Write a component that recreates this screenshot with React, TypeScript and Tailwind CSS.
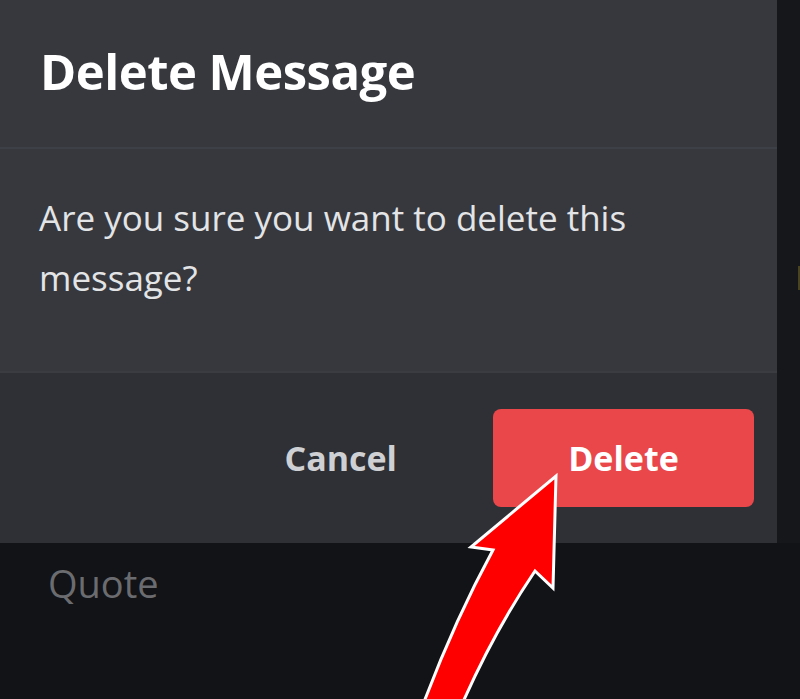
import React from "react";

const font = { fontFamily: '"Open Sans", "Noto Sans", sans-serif' };

function Arrow() {
  return (
    <svg
      className="pointer-events-none absolute left-0 top-0"
      width="800"
      height="699"
      viewBox="0 0 800 699"
    >
      <path
        d="M556 476 L553 588 L535 571 Q495 630 463 702 L424 702 Q455 620 493 550 L471 547 Z"
        fill="#ff0000"
        stroke="#ffffff"
        strokeWidth="3"
        strokeLinejoin="miter"
      />
    </svg>
  );
}

export default function App() {
  return (
    <div
      className="relative h-[699px] w-[800px] overflow-hidden bg-[#121316]"
      style={font}
    >
      <div className="flex h-[543px]">
        <div className="flex w-[777px] flex-col">
          <div className="h-[149px] border-b-2 border-[#3e4047] bg-[#36383e] pl-[40px] pt-[39px]">
            <h1 className="text-[49px] font-bold leading-[64px] tracking-[-0.5px] text-white">
              Delete Message
            </h1>
          </div>
          <div className="h-[224px] border-b-2 border-[#3a3c42] bg-[#36383e] pl-[39px] pt-[39px]">
            <p className="w-[660px] text-[35px] leading-[60px] text-[#e3e4e6]">
              Are you sure you want to delete this message?
            </p>
          </div>
          <div className="flex flex-1 items-center justify-end gap-[96px] bg-[#2e3036] pr-[23px]">
            <button className="text-[34px] font-bold text-[#cfd0d3]">
              Cancel
            </button>
            <button className="h-[98px] w-[261px] rounded-[8px] bg-[#e9474a] text-[34px] font-bold text-white">
              Delete
            </button>
          </div>
        </div>
        <div className="flex flex-1 justify-end bg-[#16171b] pt-[266px]">
          <div className="h-[24px] w-[2px] bg-[#4a4322]" />
        </div>
      </div>
      <div className="pl-[48px] pt-[18px] text-[38px] leading-[44px] text-[#6b6c70]">
        Quote
      </div>
      <Arrow />
    </div>
  );
}
